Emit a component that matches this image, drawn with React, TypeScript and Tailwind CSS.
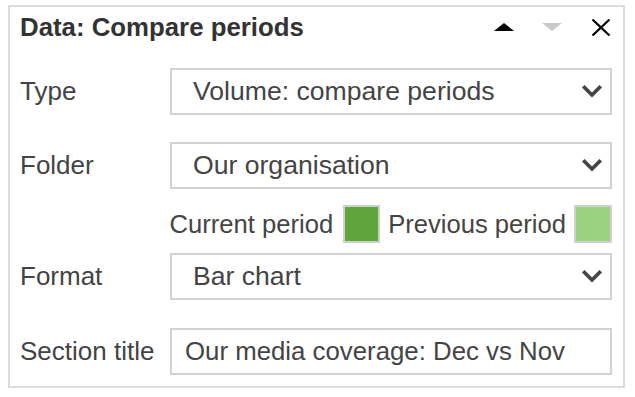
import React from 'react';

const Chevron = () => (
  <svg width="20" height="13" viewBox="0 0 20 13" className="shrink-0">
    <polyline
      points="2.5,2.5 10,10 17.5,2.5"
      fill="none"
      stroke="#444"
      strokeWidth="3.6"
      strokeLinecap="square"
    />
  </svg>
);

function SelectBox({ value }: { value: string }) {
  return (
    <div className="flex h-[47px] w-[442px] items-center justify-between border-2 border-[#d2d2d2] bg-white pl-[21px] pr-[8px] text-[26.6px] text-[#444]">
      <span>{value}</span>
      <Chevron />
    </div>
  );
}

function Row({ label, children }: { label: string; children: React.ReactNode }) {
  return (
    <div className="flex items-center">
      <div className="w-[150px] text-[26px] text-[#444]">{label}</div>
      {children}
    </div>
  );
}

export default function App() {
  return (
    <div className="h-[397px] w-[635px] bg-white pl-[8px] pt-[5px] font-['Liberation_Sans',Arial,sans-serif]">
      <div className="flex h-[383px] w-[617px] flex-col border-2 border-[#dcdcdc] px-[10px]">
        {/* header */}
        <div className="flex h-[40px] items-center justify-between">
          <h2 className="text-[25.8px] font-bold text-[#333]">Data: Compare periods</h2>
          <div className="flex items-center">
            <svg width="20" height="8" viewBox="0 0 20 8" className="mr-[28px]">
              <polygon points="0,8 10,0 20,8" fill="#000" />
            </svg>
            <svg width="20" height="8" viewBox="0 0 20 8" className="mr-[29px]">
              <polygon points="0,0 20,0 10,8" fill="#c8c8c8" />
            </svg>
            <svg width="20" height="17" viewBox="0 0 20 17" className="mr-[2px]">
              <path d="M1.5 0.5 L18.5 16.5 M18.5 0.5 L1.5 16.5" stroke="#000" strokeWidth="2.2" />
            </svg>
          </div>
        </div>

        <div className="mt-[21px]">
          <Row label="Type">
            <SelectBox value="Volume: compare periods" />
          </Row>
        </div>

        <div className="mt-[27px]">
          <Row label="Folder">
            <SelectBox value="Our organisation" />
          </Row>
        </div>

        <div className="mt-[16px] flex h-[38px] w-[592px] items-center justify-end text-[25.6px] text-[#444]">
          <span>Current period</span>
          <span className="ml-[10px] mr-[8px] h-[38px] w-[37px] border-2 border-[#cfcfcf] bg-[#5ea63b]" />
          <span>Previous period</span>
          <span className="ml-[8px] h-[38px] w-[38px] border-2 border-[#cfcfcf] bg-[#9cd27f]" />
        </div>

        <div className="mt-[10px]">
          <Row label="Format">
            <SelectBox value="Bar chart" />
          </Row>
        </div>

        <div className="mt-[28px]">
          <Row label="Section title">
            <div className="flex h-[47px] w-[442px] items-center border-2 border-[#d2d2d2] bg-white pl-[13px] text-[25.8px] text-[#444]">
              Our media coverage: Dec vs Nov
            </div>
          </Row>
        </div>
      </div>
    </div>
  );
}
